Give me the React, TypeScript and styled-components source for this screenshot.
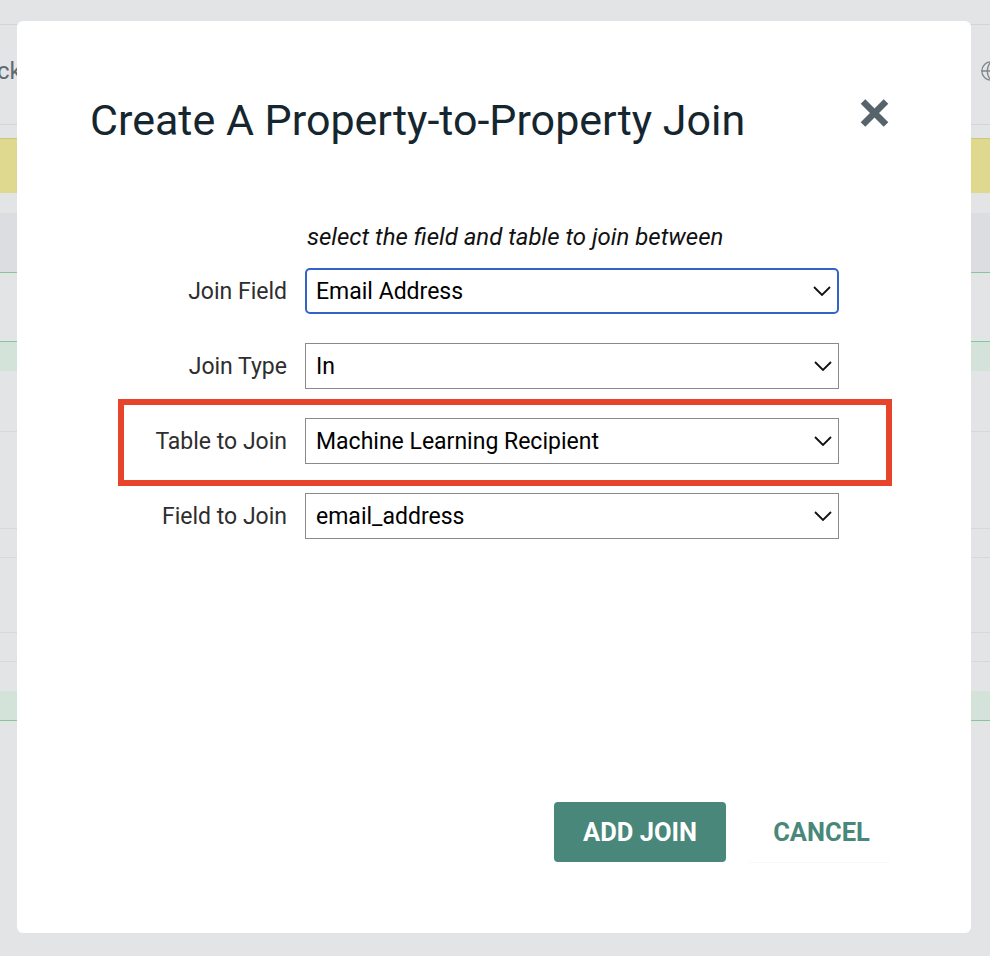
import styled, { createGlobalStyle } from "styled-components";
import { Globe } from "lucide-react";

interface JoinRow {
  id: string;
  label: string;
  value: string;
  focused?: boolean;
  highlighted?: boolean;
}

const ROWS: JoinRow[] = [
  { id: "field", label: "Join Field", value: "Email Address", focused: true },
  { id: "type", label: "Join Type", value: "In" },
  { id: "table", label: "Table to Join", value: "Machine Learning Recipient", highlighted: true },
  { id: "target", label: "Field to Join", value: "email_address" },
];

type Line = "none" | "gray" | "green";

interface BackRowItem {
  h: number;
  tint?: boolean;
  top?: boolean;
  line: Line;
}

// rows of the table behind the dialog, top to bottom
const BACK_ROWS: BackRowItem[] = [
  { h: 68, line: "none" },
  { h: 30, tint: true, top: true, line: "none" },
  { h: 61, line: "gray" },
  { h: 97, line: "gray" },
  { h: 29, line: "gray" },
  { h: 75, line: "gray" },
  { h: 29, line: "gray" },
  { h: 29, line: "none" },
  { h: 30, tint: true, line: "green" },
];

const GlobalStyle = createGlobalStyle`
  html, body {
    margin: 0;
    padding: 0;
    background: #e3e4e6;
    font-family: Roboto, "Liberation Sans", Arial, sans-serif;
  }
  * {
    box-sizing: border-box;
  }
`;

// --- page behind the dialog (only its edges show) ---

const BackPage = styled.div`
  width: 990px;
  height: 956px;
  overflow: hidden;
  display: flex;
  flex-direction: column;
  background: #e3e4e6;
`;

const TopStrip = styled.div`
  height: 25px;
  border-bottom: 1px solid #d3d5d8;
`;

const NavRow = styled.div`
  height: 100px;
  display: flex;
  align-items: center;
  justify-content: space-between;
  padding-bottom: 8px;
  border-bottom: 1px solid #d3d5d8;
  color: #5f6b73;
`;

const BackLink = styled.span`
  font-size: 24px;
  margin-left: -31px;
`;

const NavIcon = styled.span`
  display: flex;
  margin-right: -12px;
  color: #7c868d;
`;

const Banner = styled.div`
  margin-top: 13px;
  height: 55px;
  background: #dfd98f;
  border-top: 1px solid #cfc57a;
`;

const TableHead = styled.div`
  margin-top: 20px;
  height: 60px;
  background: #dcdde0;
  border-bottom: 1px solid #86c79a;
`;

const BackRow = styled.div<{ $h: number; $tint?: boolean; $top?: boolean; $line: Line }>`
  height: ${({ $h }) => $h}px;
  flex-shrink: 0;
  background: ${({ $tint }) => ($tint ? "#d3e3da" : "transparent")};
  border-top: ${({ $top }) => ($top ? "1px solid #86c79a" : "none")};
  border-bottom: ${({ $line }) =>
    $line === "green" ? "1px solid #86c79a" : $line === "gray" ? "1px solid #d6d8db" : "none"};
`;

// --- dialog ---

const Dialog = styled.div`
  position: fixed;
  left: 17px;
  top: 21px;
  width: 954px;
  height: 912px;
  background: #ffffff;
  border-radius: 6px;
  display: flex;
  flex-direction: column;
  padding: 73px 81px 71px 73px;
`;

const Header = styled.div`
  display: flex;
  align-items: flex-start;
  justify-content: space-between;
`;

const Title = styled.h2`
  margin: 0;
  font-size: 43px;
  line-height: 52px;
  font-weight: 400;
  color: #15262f;
`;

const CloseButton = styled.button`
  border: none;
  background: none;
  padding: 0;
  margin: 4px 1px 0 0;
  display: flex;
  cursor: pointer;
`;

const Form = styled.div`
  margin-top: 77px;
  display: flex;
  flex-direction: column;
  align-items: flex-start;
  gap: 29px;
`;

const Row = styled.div`
  position: relative;
  display: grid;
  grid-template-columns: 197px 534px;
  column-gap: 18px;
  align-items: center;
`;

const Hint = styled.p`
  grid-column: 2;
  margin: 0 0 -12px 2px;
  font-size: 24px;
  line-height: 28px;
  font-style: italic;
  color: #111;
`;

const Label = styled.label`
  text-align: right;
  font-size: 23px;
  color: #2e2e2e;
`;

const Highlight = styled.span`
  position: absolute;
  left: 28px;
  right: -53px;
  top: -19px;
  bottom: -22px;
  border: 6px solid #e8442b;
  pointer-events: none;
`;

const Select = styled.div<{ $focused?: boolean }>`
  height: 46px;
  display: flex;
  align-items: center;
  justify-content: space-between;
  padding: 0 6px 0 ${({ $focused }) => ($focused ? "9px" : "10px")};
  border: ${({ $focused }) => ($focused ? "2px solid #3264c8" : "1px solid #8a8a8a")};
  border-radius: ${({ $focused }) => ($focused ? "5px" : "0")};
  font-size: 23px;
  color: #000;
  background: #fff;
`;

const Footer = styled.div`
  margin-top: auto;
  display: flex;
  justify-content: flex-end;
  gap: 21px;
`;

const PrimaryButton = styled.button`
  width: 172px;
  height: 60px;
  border: none;
  border-radius: 4px;
  background: #48877a;
  color: #fff;
  font-family: Roboto, sans-serif;
  font-size: 25.5px;
  font-weight: 700;
  cursor: pointer;
`;

const TextButton = styled.button`
  width: 143px;
  height: 60px;
  padding: 0 0 0 6px;
  border: none;
  border-radius: 4px;
  background: #fff;
  box-shadow: 0 1px 1px rgba(0, 0, 0, 0.03);
  color: #48877a;
  font-family: Roboto, sans-serif;
  font-size: 25.5px;
  font-weight: 700;
  cursor: pointer;
`;

function Chevron() {
  return (
    <svg width="18" height="10" viewBox="0 0 18 10" fill="none">
      <path d="M1 1l8 8 8-8" stroke="#111" strokeWidth="1.8" />
    </svg>
  );
}

function CloseIcon() {
  return (
    <svg width="29" height="30" viewBox="0 0 29 30">
      <path d="M3 3.5l23 23M26 3.5l-23 23" stroke="#56636b" strokeWidth="6.5" />
    </svg>
  );
}

export default function App() {
  return (
    <>
      <GlobalStyle />
      <BackPage>
        <TopStrip />
        <NavRow>
          <BackLink>Back</BackLink>
          <NavIcon>
            <Globe size={22} strokeWidth={1.4} />
          </NavIcon>
        </NavRow>
        <Banner />
        <TableHead />
        {BACK_ROWS.map((r, i) => (
          <BackRow key={i} $h={r.h} $tint={r.tint} $top={r.top} $line={r.line} />
        ))}
      </BackPage>

      <Dialog role="dialog">
        <Header>
          <Title>Create A Property-to-Property Join</Title>
          <CloseButton aria-label="Close">
            <CloseIcon />
          </CloseButton>
        </Header>

        <Form>
          <Row>
            <Hint>select the field and table to join between</Hint>
          </Row>
          {ROWS.map((row) => (
            <Row key={row.id}>
              {row.highlighted && <Highlight />}
              <Label>{row.label}</Label>
              <Select $focused={row.focused}>
                <span>{row.value}</span>
                <Chevron />
              </Select>
            </Row>
          ))}
        </Form>

        <Footer>
          <PrimaryButton>ADD JOIN</PrimaryButton>
          <TextButton>CANCEL</TextButton>
        </Footer>
      </Dialog>
    </>
  );
}
